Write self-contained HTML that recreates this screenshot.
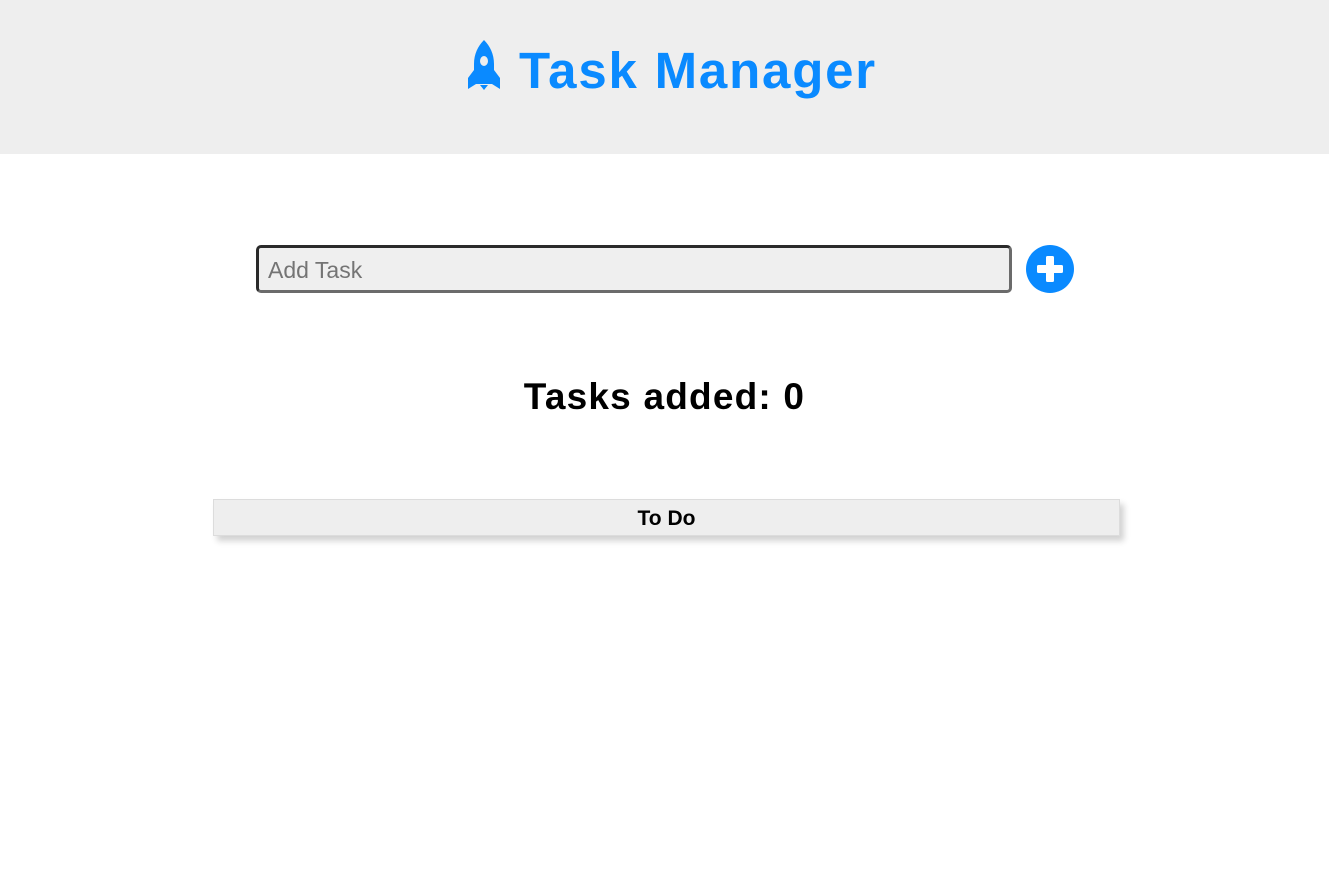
<!DOCTYPE html>
<html><head><style>
body{margin:0;width:1329px;height:875px;background:#fff;font-family:"Liberation Sans",sans-serif;position:relative;overflow:hidden}
.hdr{position:absolute;left:0;top:0;width:1329px;height:154px;background:#eeeeee}
.title{position:absolute;left:519px;top:41px;font-size:51px;font-weight:bold;color:#0a8aff;letter-spacing:1.8px;white-space:nowrap;line-height:60px}
.inp{position:absolute;left:256px;top:245px;width:750px;height:42px;border:3px solid #2a2a2a;border-bottom-color:#6b6b6b;border-right-color:#6b6b6b;border-radius:5px;background:#efefef;box-sizing:content-box}
.ph{position:absolute;left:9px;top:9px;font-size:23px;color:#747474}
.cnt{position:absolute;left:0;width:1329px;top:375px;text-align:center;font-size:37px;font-weight:bold;color:#000;line-height:44px;letter-spacing:1.2px}
.todo{position:absolute;left:213px;top:499px;width:905px;height:35px;background:#eeeeee;border:1px solid #dcdcdc;box-shadow:4px 5px 6px rgba(0,0,0,0.18);text-align:center;font-weight:bold;font-size:21px;line-height:37px}
</style></head><body>
<div class="hdr"></div>
<svg style="position:absolute;left:464px;top:40px" width="40" height="50" viewBox="0 0 40 50">
<path fill="#0a8aff" d="M20 0 C26 6 30 14 30 24 L30 30 L36 38 L36 49 L28 44 L12 44 L4 49 L4 38 L10 30 L10 24 C10 14 14 6 20 0 Z"/>
<ellipse cx="20" cy="21" rx="4" ry="5" fill="#eeeeee"/>
<path fill="#0a8aff" d="M16 45 L24 45 L20 50 Z"/>
</svg>
<div class="title">Task Manager</div>
<div class="inp"><div class="ph">Add Task</div></div>
<svg style="position:absolute;left:1026px;top:245px" width="48" height="48" viewBox="0 0 48 48">
<circle cx="24" cy="24" r="24" fill="#0a8aff"/>
<rect x="20" y="11" width="8" height="26" rx="1.5" fill="#fff"/>
<rect x="11" y="20" width="26" height="8" rx="1.5" fill="#fff"/>
</svg>
<div class="cnt">Tasks added: 0</div>
<div class="todo">To Do</div>
</body></html>
